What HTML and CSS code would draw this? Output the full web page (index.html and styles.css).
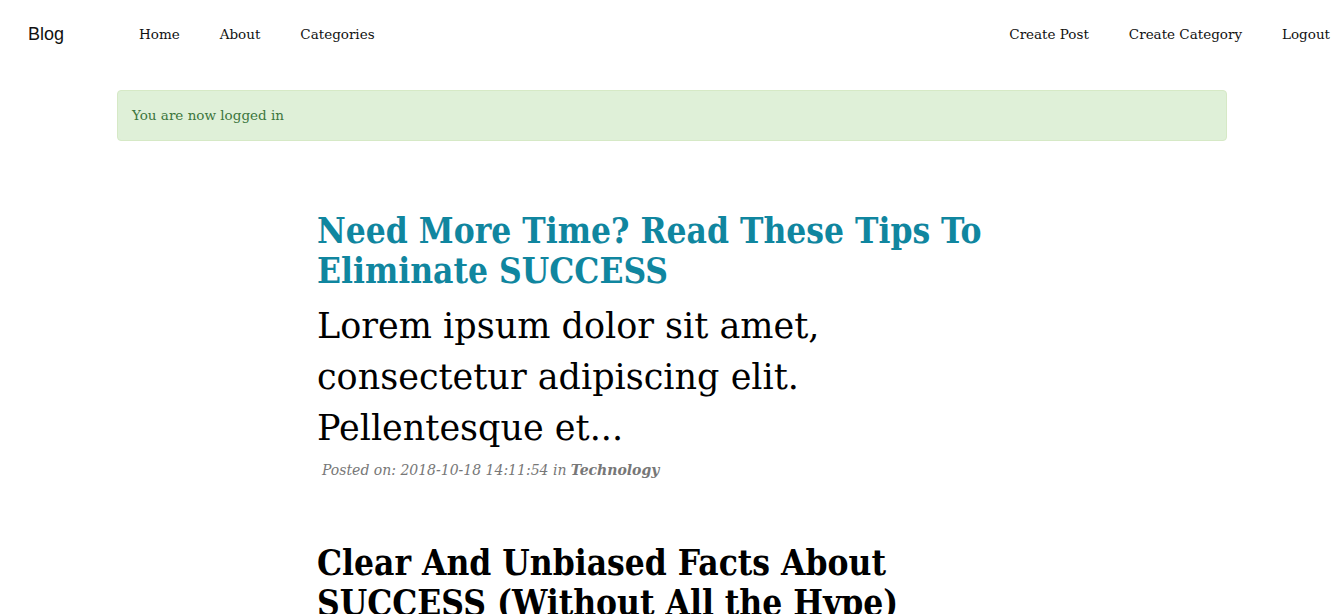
FILE: index.html
```html
<!DOCTYPE html>
<html lang="en">
<head>
<meta charset="utf-8">
<title>Blog</title>
<link rel="stylesheet" href="styles.css">
</head>
<body>
<nav class="navbar">
  <a class="brand" href="#">Blog</a>
  <ul class="nav nav-left">
    <li><a href="#">Home</a></li>
    <li><a href="#">About</a></li>
    <li><a href="#">Categories</a></li>
  </ul>
  <ul class="nav nav-right">
    <li><a href="#">Create Post</a></li>
    <li><a href="#">Create Category</a></li>
    <li><a href="#">Logout</a></li>
  </ul>
</nav>
<main class="container">
  <div class="alert">You are now logged in</div>
  <div class="posts">
    <article class="post">
      <h2 class="post-title"><a href="#">Need More Time? Read These Tips To Eliminate SUCCESS</a></h2>
      <p class="post-body">Lorem ipsum dolor sit amet, consectetur adipiscing elit. Pellentesque et...</p>
      <p class="post-meta">Posted on: 2018-10-18 14:11:54 in <strong>Technology</strong></p>
    </article>
    <article class="post">
      <h2 class="post-title plain">Clear And Unbiased Facts About SUCCESS (Without All the Hype)</h2>
      <p class="post-body">Lorem ipsum dolor sit amet, consectetur adipiscing elit. Pellentesque et...</p>
    </article>
  </div>
</main>
</body>
</html>
```
FILE: styles.css
```css
html, body {
  margin: 0;
  padding: 0;
  background: #fff;
}
body {
  font-family: "DejaVu Serif", serif;
  color: #000;
  overflow: hidden;
}
a { text-decoration: none; color: inherit; }

.navbar {
  height: 68px;
  display: flex;
  align-items: center;
  padding: 0 10px 0 28px;
}
.brand {
  font-family: "Liberation Sans", Arial, sans-serif;
  font-size: 18px;
  color: #111;
  width: 91px;
}
.nav {
  list-style: none;
  margin: 0;
  padding: 0;
  display: flex;
  gap: 40px;
  font-size: 13.5px;
  color: #111;
}
.nav-left { margin-left: 20px; }
.nav-right { margin-left: auto; }

.container {
  width: 1110px;
  margin-left: 117px;
}
.alert {
  box-sizing: border-box;
  height: 51px;
  margin-top: 22px;
  padding: 15px 14px;
  line-height: 19px;
  font-size: 13.5px;
  color: #3c763d;
  background: #dff0d8;
  border: 1px solid #d6e9c6;
  border-radius: 4px;
}
.posts {
  margin-left: 200px;
  width: 700px;
}
.post-title {
  margin: 70px 0 10px;
  font-size: 35px;
  line-height: 40px;
  font-weight: bold;
  font-stretch: condensed;
  color: #10869f;
}
.post + .post .post-title { margin-top: 62px; }
.post-title.plain { color: #000; }
.post-body {
  margin: 0;
  font-size: 35px;
  line-height: 51px;
}
.post-meta {
  margin: 5px 0 0 5px;
  font-size: 14px;
  line-height: 22px;
  font-style: italic;
  color: #777;
}
.post-meta strong { font-weight: bold; }
```
